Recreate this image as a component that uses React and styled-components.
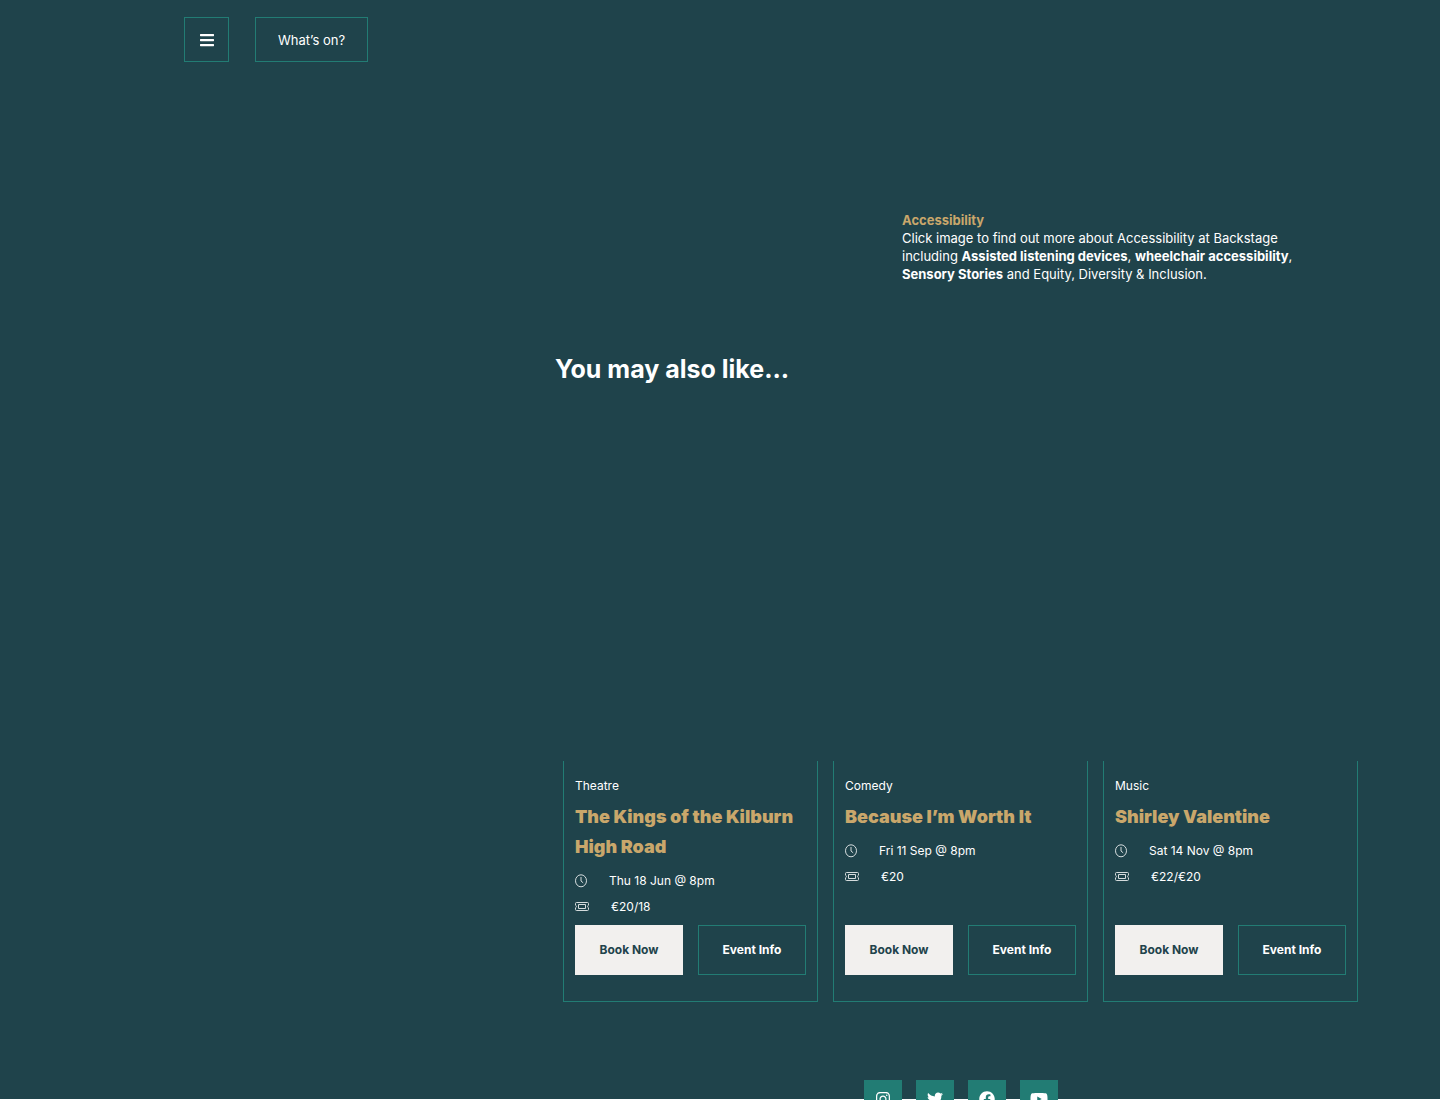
import React from "react";
import styled, { createGlobalStyle } from "styled-components";
import {
  FaBars,
  FaInstagram,
  FaTwitter,
  FaFacebook,
  FaYoutube,
} from "react-icons/fa";

const GlobalStyle = createGlobalStyle`
  * {
    box-sizing: border-box;
  }
  body {
    margin: 0;
    background: #fff;
    font-family: Inter, "Open Sans", sans-serif;
    font-size: 12px;
    line-height: 18px;
    color: #fff;
  }
`;

const Page = styled.div`
  background: #1f434b;
  padding-bottom: 97px;
`;

const TopBar = styled.header`
  display: flex;
  gap: 26px;
  padding: 17px 184px 0;
`;

const MenuButton = styled.button`
  display: flex;
  align-items: center;
  justify-content: center;
  width: 45px;
  height: 45px;
  padding: 0;
  background: none;
  border: 1px solid #227c74;
  color: #fff;
  cursor: pointer;
`;

const WhatsOnLink = styled.a`
  display: flex;
  align-items: center;
  height: 45px;
  padding: 0 22px;
  border: 1px solid #227c74;
  font-size: 13px;
  color: #fff;
  text-decoration: none;
`;

const Main = styled.main`
  max-width: 1292px;
  margin: 0 auto;
  padding-left: 481px;
`;

const AccessSection = styled.section`
  margin-top: 149px;
  padding: 0 64px 0 347px;
`;

const AccessHeading = styled.h2`
  margin: 0;
  font-size: 13px;
  line-height: 18px;
  font-weight: 700;
  color: #c9a76b;
`;

const AccessText = styled.p`
  margin: 0;
  font-size: 13px;
`;

const SectionHeading = styled.h2`
  margin: 68px 0 374px;
  font-size: 25px;
  line-height: 36px;
  font-weight: 700;
`;

const CardList = styled.div`
  display: grid;
  grid-template-columns: repeat(3, 1fr);
  gap: 15px;
  padding: 0 8px;
`;

const Card = styled.article`
  display: flex;
  flex-direction: column;
  padding: 16px 11px 26px;
  border: 1px solid #227c74;
  border-top: 0;
`;

const CardTitle = styled.h3`
  margin: 7px 0 6px;
  font-size: 18px;
  line-height: 30px;
  font-weight: 900;
  color: #c9a76b;
`;

const InfoRow = styled.div`
  display: flex;
  align-items: center;
  gap: 22px;
  line-height: 26px;
`;

const CardButtons = styled.div`
  display: flex;
  gap: 15px;
  margin-top: auto;
  padding-top: 5px;
`;

const CardLink = styled.a`
  flex: 1;
  line-height: 48px;
  text-align: center;
  font-weight: 700;
  text-decoration: none;
  white-space: nowrap;
  border: 1px solid ${(props) => (props.$filled ? "#f2f0ee" : "#227c74")};
  background: ${(props) => (props.$filled ? "#f2f0ee" : "none")};
  color: ${(props) => (props.$filled ? "#1f434b" : "#fff")};
`;

const Footer = styled.footer`
  max-width: 1292px;
  margin: 0 auto;
  padding-left: 481px;
`;

const SocialList = styled.div`
  display: flex;
  justify-content: center;
  gap: 14px;
  margin-top: -19px;
`;

const SocialLink = styled.a`
  display: flex;
  align-items: center;
  justify-content: center;
  width: 38px;
  height: 38px;
  background: #227c74;
  color: #fff;
`;

const ClockIcon = () => (
  <svg width="12" height="14" viewBox="0 0 12 14" fill="none" stroke="#d5dcdd" strokeWidth="1" aria-hidden="true">
    <ellipse cx="6" cy="6.8" rx="5.5" ry="6" />
    <path d="M6 3.4V7l1.900 1.600" strokeLinecap="round" />
  </svg>
);

const TicketIcon = () => (
  <svg width="14" height="10" viewBox="0 0 14 10" fill="none" stroke="#d5dcdd" strokeWidth="1" aria-hidden="true">
    <path d="M1.500.5h11a1 1 0 0 1 1 1v1.700a1.400 1.400 0 0 0 0 2.600v1.700a1 1 0 0 1-1 1h-11a1 1 0 0 1-1-1V5.800a1.400 1.400 0 0 0 0-2.600V1.500a1 1 0 0 1 1-1z" />
    <path d="M3.500 2.500h7v4h-7z" />
  </svg>
);

const events = [
  { id: 1, type: "Theatre", title: "The Kings of the Kilburn High Road", date: "Thu 18 Jun @ 8pm", price: "€20/18" },
  { id: 2, type: "Comedy", title: "Because I’m Worth It", date: "Fri 11 Sep @ 8pm", price: "€20" },
  { id: 3, type: "Music", title: "Shirley Valentine", date: "Sat 14 Nov @ 8pm", price: "€22/€20" },
];

const socials = [
  { name: "Instagram", Icon: FaInstagram, size: 16 },
  { name: "Twitter", Icon: FaTwitter, size: 16 },
  { name: "Facebook", Icon: FaFacebook, size: 16 },
  { name: "YouTube", Icon: FaYoutube, size: 18 },
];

const EventCard = ({ event }) => (
  <Card>
    <span>{event.type}</span>
    <CardTitle>{event.title}</CardTitle>
    <InfoRow>
      <ClockIcon />
      {event.date}
    </InfoRow>
    <InfoRow>
      <TicketIcon />
      {event.price}
    </InfoRow>
    <CardButtons>
      <CardLink href="#book" $filled>Book Now</CardLink>
      <CardLink href="#info">Event Info</CardLink>
    </CardButtons>
  </Card>
);

const App = () => {
  return (
    <>
      <GlobalStyle />
      <Page>
        <TopBar>
          <MenuButton aria-label="Menu">
            <FaBars size={16} />
          </MenuButton>
          <WhatsOnLink href="#whats-on">What’s on?</WhatsOnLink>
        </TopBar>
        <Main>
          <AccessSection>
            <AccessHeading>Accessibility</AccessHeading>
            <AccessText>
              Click image to find out more about Accessibility at Backstage
              including <strong>Assisted listening devices</strong>,{" "}
              <strong>wheelchair accessibility</strong>,{" "}
              <strong>Sensory Stories</strong> and Equity, Diversity &amp; Inclusion.
            </AccessText>
          </AccessSection>
          <SectionHeading>You may also like...</SectionHeading>
          <CardList>
            {events.map((event) => (
              <EventCard key={event.id} event={event} />
            ))}
          </CardList>
        </Main>
      </Page>
      <Footer>
        <SocialList>
          {socials.map(({ name, Icon, size }) => (
            <SocialLink key={name} href={`#${name.toLowerCase()}`} aria-label={name}>
              <Icon size={size} />
            </SocialLink>
          ))}
        </SocialList>
      </Footer>
    </>
  );
};

export default App;
